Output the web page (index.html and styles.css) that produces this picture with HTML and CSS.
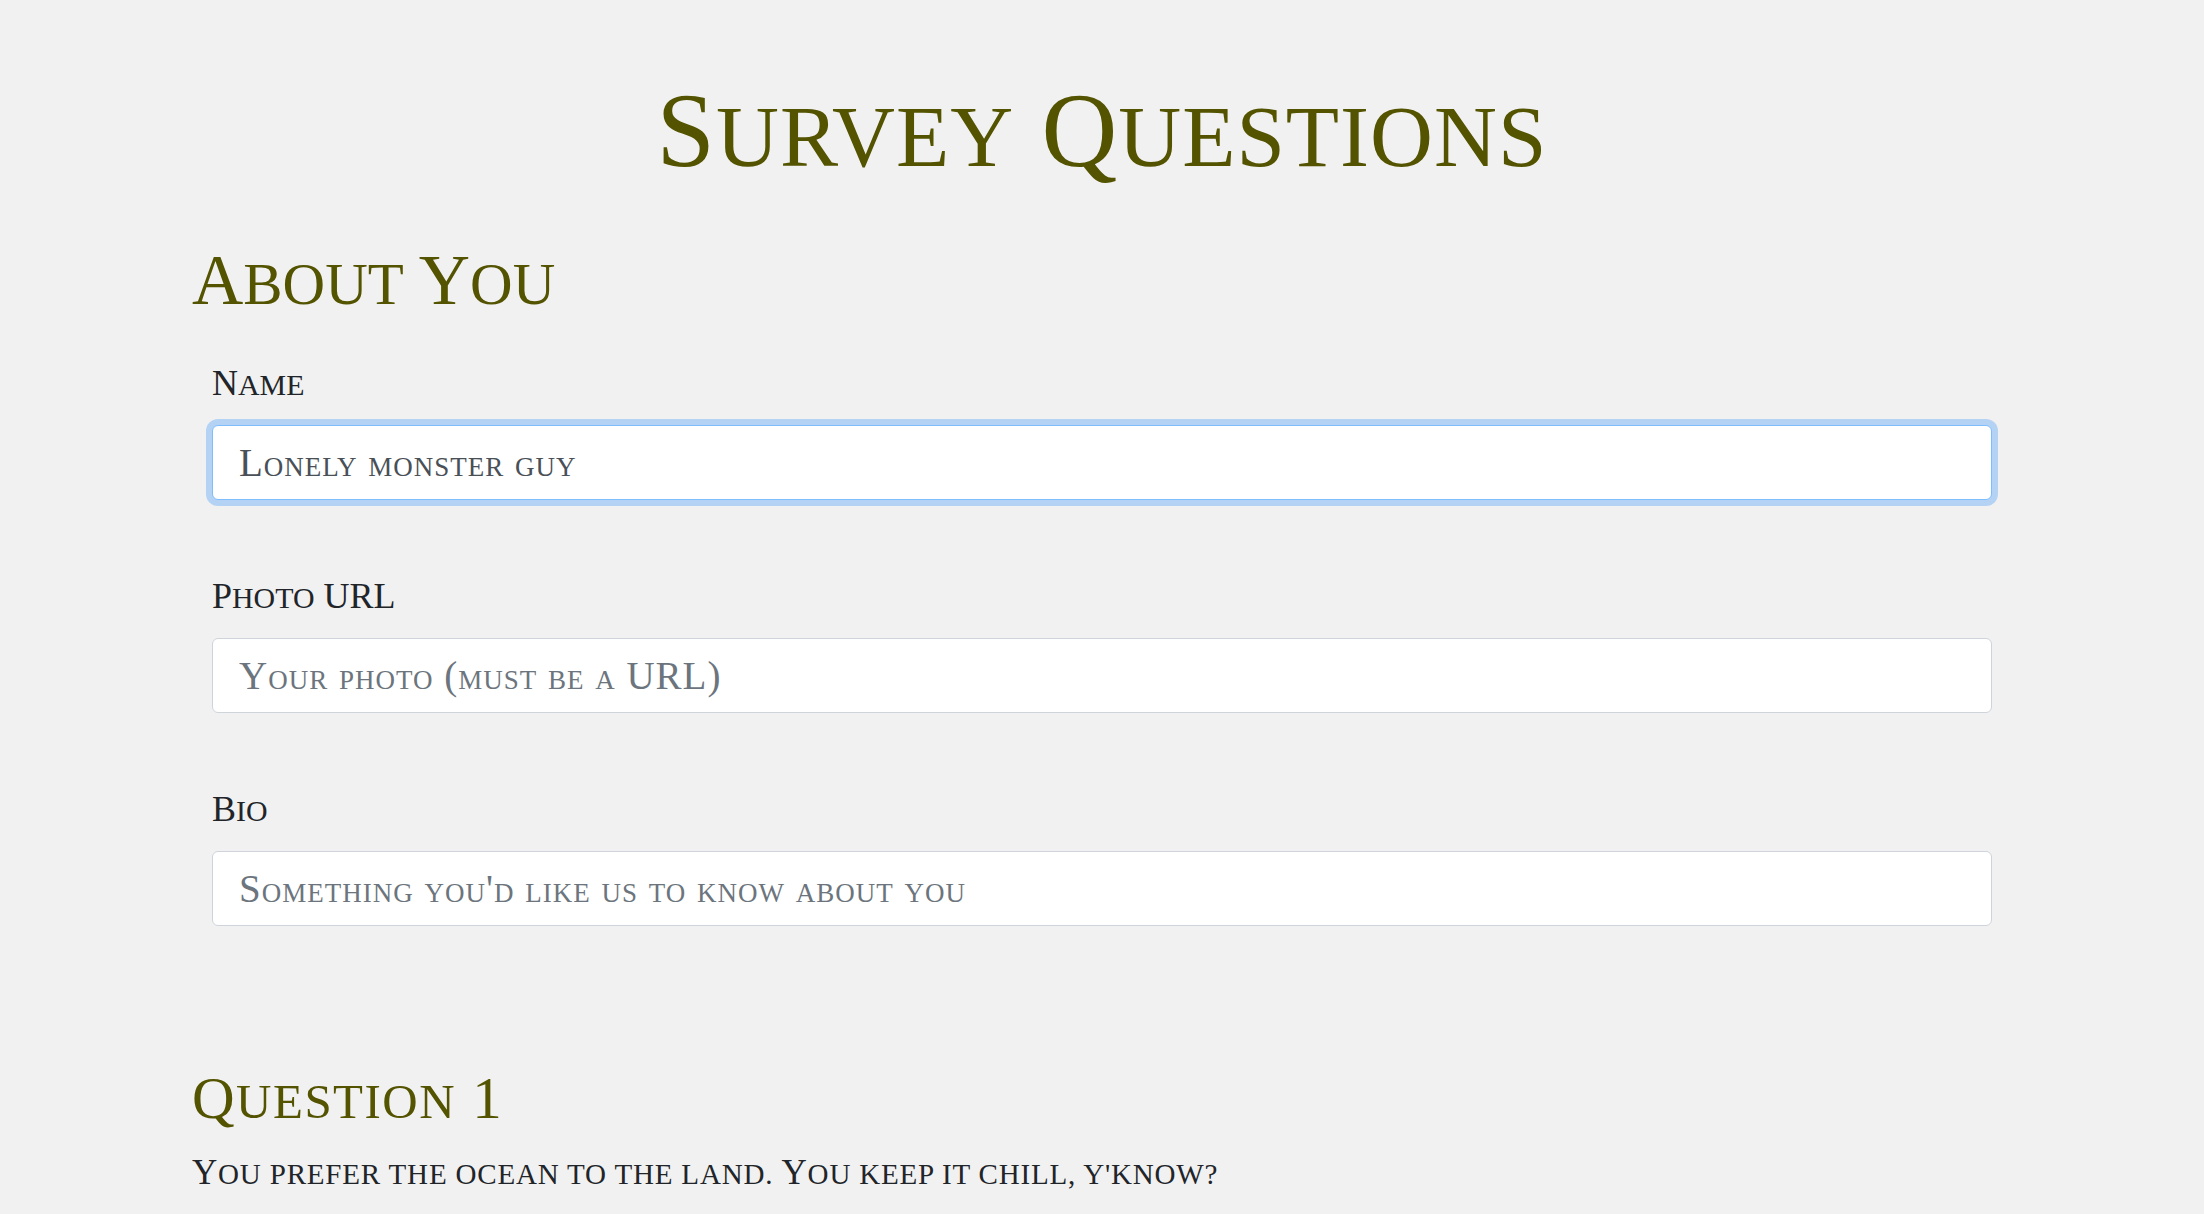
FILE: index.html
```html
<!DOCTYPE html>
<html lang="en">
<head>
<meta charset="utf-8">
<title>Survey Questions</title>
<link rel="stylesheet" href="styles.css">
</head>
<body>
<main class="container">
  <h1 class="page-title">S<span class="sc">urvey</span> Q<span class="sc">uestions</span></h1>
  <section class="about">
    <h2 class="section-title">A<span class="sc">bout</span> Y<span class="sc">ou</span></h2>
    <form class="form">
      <div class="form-group">
        <label class="label" for="name">N<span class="sc">ame</span></label>
        <input class="input is-focus" id="name" type="text" value="Lonely monster guy">
      </div>
      <div class="form-group">
        <label class="label" for="photo">P<span class="sc">hoto</span> URL</label>
        <input class="input" id="photo" type="text" placeholder="Your photo (must be a URL)">
      </div>
      <div class="form-group">
        <label class="label" for="bio">B<span class="sc">io</span></label>
        <input class="input" id="bio" type="text" placeholder="Something you'd like us to know about you">
      </div>
    </form>
  </section>
  <section class="question">
    <h2 class="question-title">Q<span class="sc">uestion</span> 1</h2>
    <p class="question-text">Y<span class="sc">ou prefer the ocean to the land.</span> Y<span class="sc">ou keep it chill, y'know?</span></p>
  </section>
</main>
</body>
</html>
```
FILE: styles.css
```css
html, body {
  margin: 0;
  padding: 0;
}
body {
  background: #f1f1f1;
  font-family: "Liberation Serif", "Times New Roman", serif;
  color: #212529;
  line-height: 1;
}
.container {
  padding: 0 192px;
}
.sc {
  font-size: 0.83em;
  text-transform: uppercase;
}
.page-title {
  margin: 78px 0 0;
  text-align: center;
  font-size: 105px;
  font-weight: 400;
  line-height: 1;
  color: #535300;
  letter-spacing: 1px;
}
.section-title {
  margin: 62px 0 0;
  font-size: 71px;
  font-weight: 400;
  line-height: 1;
  color: #535300;
}
.form {
  display: flex;
  flex-direction: column;
  gap: 78px;
  padding: 49px 20px 0;
}
.form-group {
  display: flex;
  flex-direction: column;
  gap: 24px;
}
.label {
  font-size: 36px;
  line-height: 1;
  color: #212529;
}
.input {
  box-sizing: border-box;
  height: 75px;
  width: 100%;
  margin: 0;
  padding: 0 26px;
  border: 1px solid #ced4da;
  border-radius: 6px;
  background: #fff;
  font-family: "Liberation Serif", "Times New Roman", serif;
  font-variant: small-caps;
  font-size: 39px;
  letter-spacing: 1px;
  color: #495057;
  outline: none;
}
.input::placeholder {
  color: #6c757d;
  opacity: 1;
}
.input.is-focus {
  border-color: #80bdff;
  box-shadow: 0 0 0 6px rgba(0, 123, 255, 0.25);
}
.question {
  padding-top: 143px;
}
.question-title {
  margin: 0;
  font-size: 59px;
  font-weight: 400;
  line-height: 1;
  color: #535300;
  letter-spacing: 1.5px;
}
.question-text {
  margin: 27px 0 0;
  font-size: 35px;
  line-height: 1;
  color: #212529;
  letter-spacing: 0.8px;
}
```
